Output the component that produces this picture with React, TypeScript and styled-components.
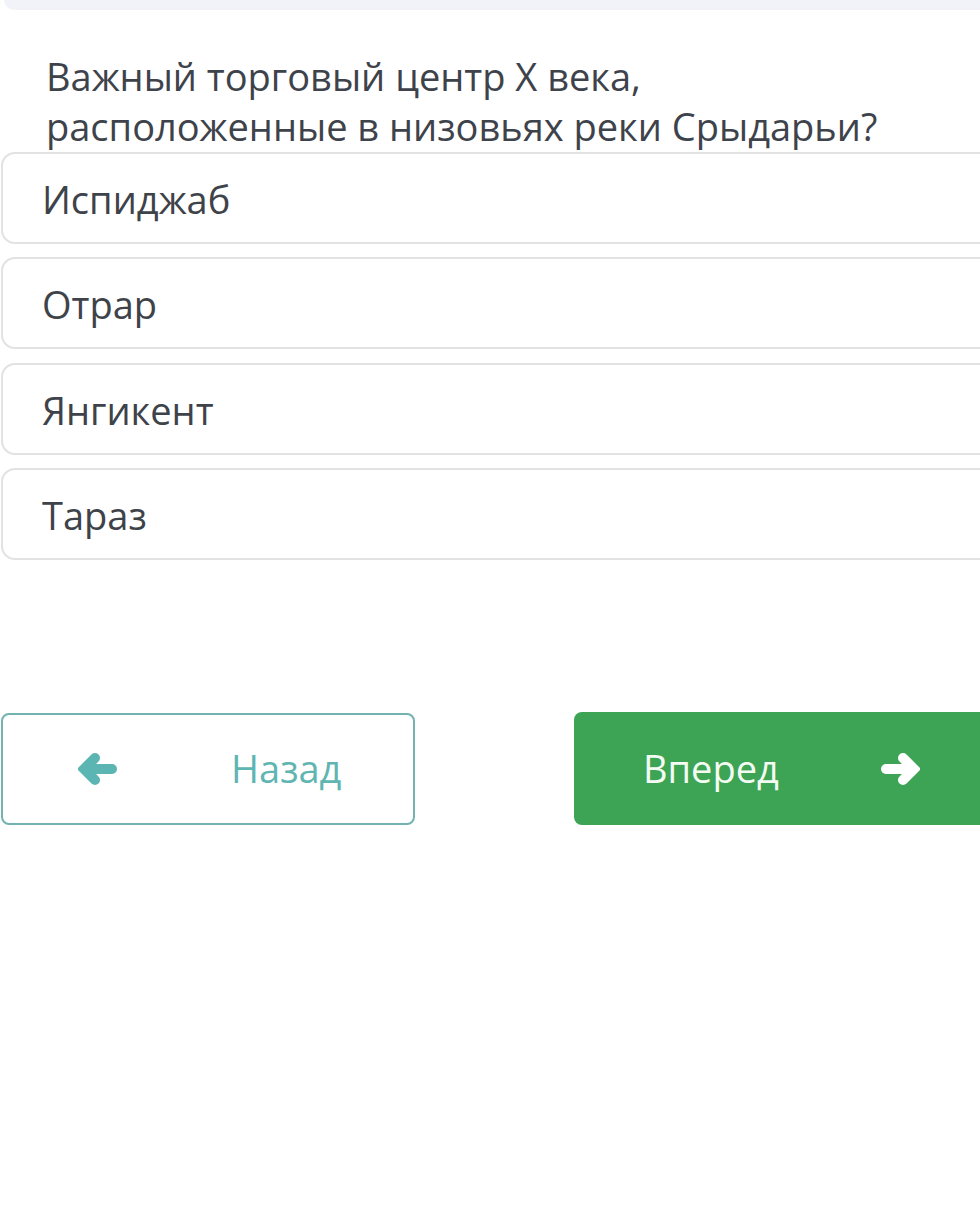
import React from "react";
import styled, { createGlobalStyle } from "styled-components";

const Global = createGlobalStyle`
  html, body { margin: 0; padding: 0; background: #ffffff; overflow: hidden; }
  body { font-family: "Open Sans", "Noto Sans", sans-serif; }
`;

const Page = styled.div`
  width: 980px;
  height: 1216px;
  overflow: hidden;
  display: flex;
  flex-direction: column;
`;

const TopBar = styled.div`
  flex-shrink: 0;
  height: 10px;
  margin-left: 4px;
  background: #f2f3f8;
  border-bottom-left-radius: 10px;
`;

const Question = styled.div`
  margin-top: 41px;
  padding-left: 46px;
  font-size: 38px;
  line-height: 50px;
  color: #3e434b;
`;

const Options = styled.div`
  margin-top: 1px;
  display: flex;
  flex-direction: column;
  gap: 13.4px;
  padding-left: 1px;
`;

const Option = styled.div`
  flex-shrink: 0;
  box-sizing: border-box;
  width: 1000px;
  height: 92px;
  border: 2px solid #e2e2e2;
  border-radius: 14px;
  display: flex;
  align-items: center;
  padding: 2px 0 0 39px;
  font-size: 38px;
  color: #3e4249;
`;

const Nav = styled.div`
  margin-top: 152px;
  display: flex;
  align-items: center;
  gap: 159px;
  padding-left: 1px;
`;

const BackButton = styled.div`
  flex-shrink: 0;
  box-sizing: border-box;
  width: 414px;
  height: 112px;
  border: 2px solid #72b3b1;
  border-radius: 8px;
  display: flex;
  align-items: center;
  padding-left: 75px;
  gap: 113px;
  font-size: 38px;
  color: #5fb5b1;
`;

const NextButton = styled.div`
  flex-shrink: 0;
  box-sizing: border-box;
  width: 430px;
  height: 113px;
  background: #3ca454;
  border-radius: 8px;
  display: flex;
  align-items: center;
  padding-left: 69px;
  gap: 101px;
  font-size: 38px;
  color: #f3fbf3;
`;

const Label = styled.span`
  line-height: 1;
  padding-bottom: 2px;
`;

const ArrowSvg = styled.svg`
  display: block;
  width: 40px;
  height: 32px;
  flex-shrink: 0;
`;

function Arrow({ dir, color }: { dir: "left" | "right"; color: string }) {
  return (
    <ArrowSvg viewBox="0 0 40 32" style={dir === "right" ? { transform: "scaleX(-1)" } : undefined}>
      <g fill="none" stroke={color} strokeWidth={10} strokeLinecap="round" strokeLinejoin="miter">
        <path d="M9 16 H34" />
        <path d="M17 5 L6 16 L17 27" />
      </g>
    </ArrowSvg>
  );
}

const options = ["Испиджаб", "Отрар", "Янгикент", "Тараз"];

export default function App() {
  return (
    <Page>
      <Global />
      <TopBar />
      <Question>
        Важный торговый центр X века,
        <br />
        расположенные в низовьях реки Срыдарьи?
      </Question>
      <Options>
        {options.map((o) => (
          <Option key={o}>{o}</Option>
        ))}
      </Options>
      <Nav>
        <BackButton>
          <Arrow dir="left" color="#5bb5b2" />
          <Label>Назад</Label>
        </BackButton>
        <NextButton>
          <Label>Вперед</Label>
          <Arrow dir="right" color="#ffffff" />
        </NextButton>
      </Nav>
    </Page>
  );
}
